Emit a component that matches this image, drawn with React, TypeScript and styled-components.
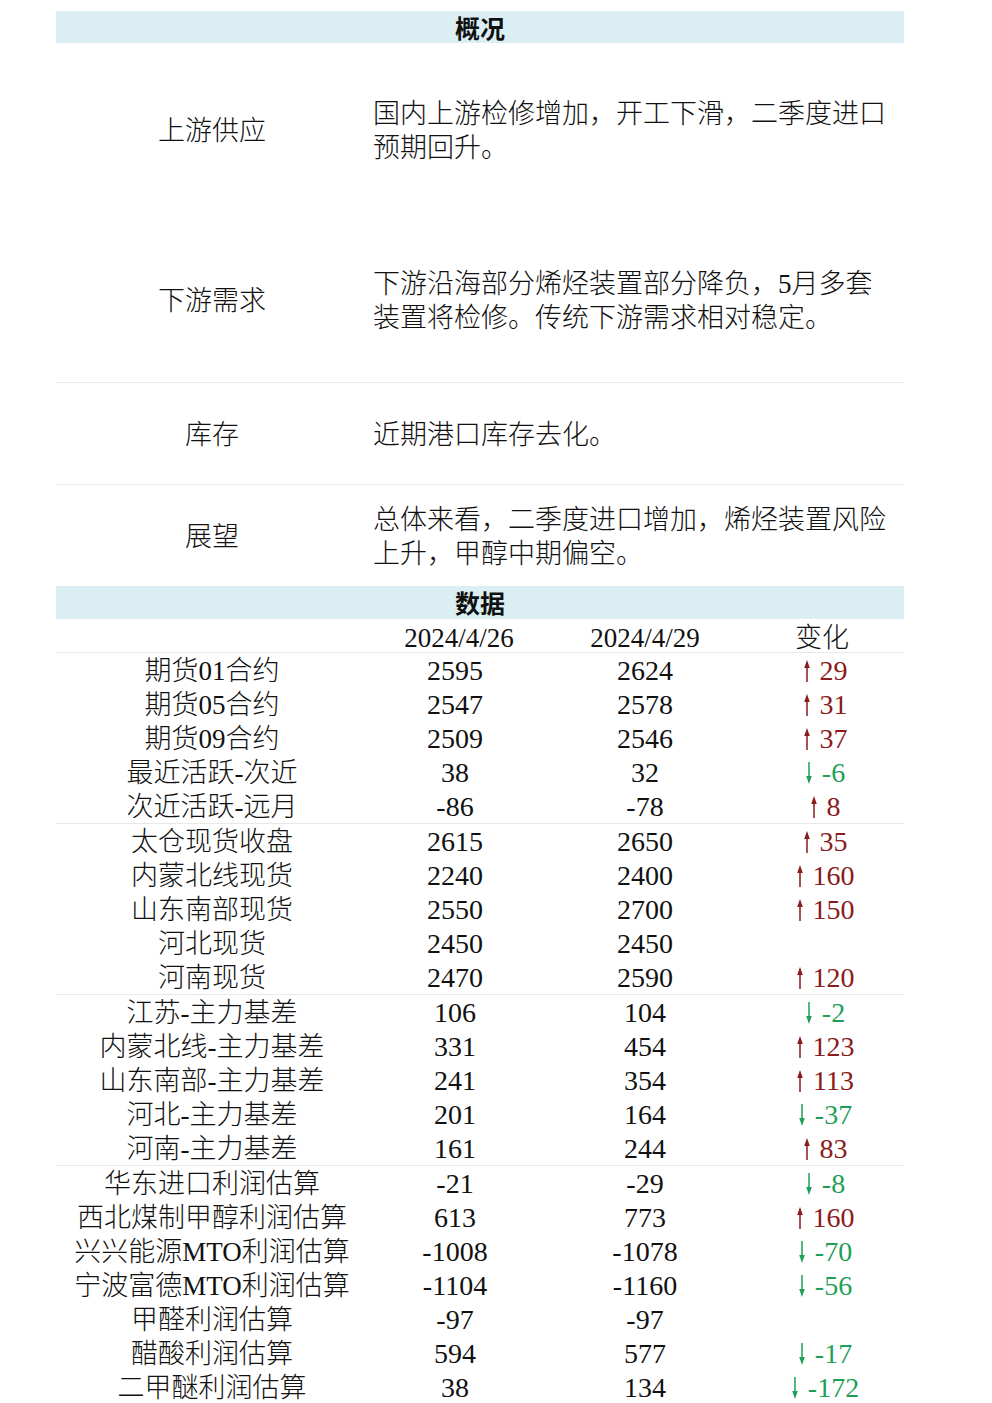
import React from "react";
import styled, { createGlobalStyle } from "styled-components";

const Global = createGlobalStyle`
  html, body { margin: 0; padding: 0; background: #ffffff; }
  body {
    font-family: "Liberation Serif", "Noto Sans CJK SC", serif;
    color: #111111;
  }
`;

const Page = styled.div`
  width: 848px;
  margin: 11px 0 0 56px;
  font-size: 27px;
  font-weight: 300;
`;

const Band = styled.div<{ $h: number }>`
  height: ${(p) => p.$h}px;
  background: #daeef3;
  display: flex;
  align-items: center;
  justify-content: center;
  font-family: "Noto Sans CJK SC", sans-serif;
  font-weight: 700;
  font-size: 25px;
  line-height: 1;
`;

const SummaryRow = styled.div<{ $h: number; $divider?: boolean }>`
  height: ${(p) => p.$h}px;
  display: grid;
  grid-template-columns: 312px 1fr;
  align-items: center;
  border-bottom: ${(p) => (p.$divider ? "1px solid #ececec" : "none")};
  box-sizing: border-box;
  padding-top: 2px;
`;

const SummaryLabel = styled.div`
  text-align: center;
  line-height: 34px;
`;

const SummaryText = styled.div`
  padding-left: 5px;
  width: 520px;
  line-height: 34px;
`;

const Grid = styled.div`
  display: grid;
  grid-template-columns: 312px 182px 190px 164px;
  line-height: 34px;
  box-sizing: border-box;
  padding-top: 1px;
`;

const HeadRow = styled(Grid)`
  height: 34px;
  border-bottom: 1px solid #e8e8e8;
  padding-top: 2px;
`;

const Group = styled.div`
  border-bottom: 1px solid #e8e8e8;
`;

const Row = styled(Grid)`
  height: 34px;
`;

const Cell = styled.div`
  text-align: center;
  white-space: nowrap;
`;

const NumCell = styled(Cell)<{ $shift?: number }>`
  font-size: 28px;
  padding-right: ${(p) => p.$shift ?? 0}px;
`;

const ChangeCell = styled.div<{ $up: boolean }>`
  display: flex;
  align-items: center;
  justify-content: center;
  gap: 9px;
  padding-left: 6px;
  font-size: 28px;
  color: ${(p) => (p.$up ? "#8b1a1a" : "#1f9f57")};
  white-space: nowrap;
`;

const Arrow = ({ up }: { up: boolean }) => (
  <svg width="8" height="22" viewBox="0 0 8 22" style={{ display: "block" }}>
    {up ? (
      <>
        <line x1="4" y1="6" x2="4" y2="22" stroke="currentColor" strokeWidth="1.5" />
        <polygon points="4,0 1.2,8 6.8,8" fill="currentColor" />
      </>
    ) : (
      <>
        <line x1="4" y1="0" x2="4" y2="16" stroke="currentColor" strokeWidth="1.5" />
        <polygon points="4,22 1.2,14 6.8,14" fill="currentColor" />
      </>
    )}
  </svg>
);

type DataRow = [string, string, string, string];

const groups: DataRow[][] = [
  [
    ["期货01合约", "2595", "2624", "29"],
    ["期货05合约", "2547", "2578", "31"],
    ["期货09合约", "2509", "2546", "37"],
    ["最近活跃-次近", "38", "32", "-6"],
    ["次近活跃-远月", "-86", "-78", "8"],
  ],
  [
    ["太仓现货收盘", "2615", "2650", "35"],
    ["内蒙北线现货", "2240", "2400", "160"],
    ["山东南部现货", "2550", "2700", "150"],
    ["河北现货", "2450", "2450", ""],
    ["河南现货", "2470", "2590", "120"],
  ],
  [
    ["江苏-主力基差", "106", "104", "-2"],
    ["内蒙北线-主力基差", "331", "454", "123"],
    ["山东南部-主力基差", "241", "354", "113"],
    ["河北-主力基差", "201", "164", "-37"],
    ["河南-主力基差", "161", "244", "83"],
  ],
  [
    ["华东进口利润估算", "-21", "-29", "-8"],
    ["西北煤制甲醇利润估算", "613", "773", "160"],
    ["兴兴能源MTO利润估算", "-1008", "-1078", "-70"],
    ["宁波富德MTO利润估算", "-1104", "-1160", "-56"],
    ["甲醛利润估算", "-97", "-97", ""],
    ["醋酸利润估算", "594", "577", "-17"],
    ["二甲醚利润估算", "38", "134", "-172"],
  ],
];

const summary = [
  { label: "上游供应", text: "国内上游检修增加，开工下滑，二季度进口预期回升。", h: 174, divider: false },
  { label: "下游需求", text: "下游沿海部分烯烃装置部分降负，5月多套装置将检修。传统下游需求相对稳定。", h: 166, divider: true },
  { label: "库存", text: "近期港口库存去化。", h: 102, divider: true },
  { label: "展望", text: "总体来看，二季度进口增加，烯烃装置风险上升，甲醇中期偏空。", h: 101, divider: false },
];

export default function App() {
  return (
    <>
      <Global />
      <Page>
        <Band $h={32}>概况</Band>
        {summary.map((s) => (
          <SummaryRow key={s.label} $h={s.h} $divider={s.divider}>
            <SummaryLabel>{s.label}</SummaryLabel>
            <SummaryText>{s.text}</SummaryText>
          </SummaryRow>
        ))}
        <Band $h={33}>数据</Band>
        <HeadRow>
          <Cell />
          <Cell>2024/4/26</Cell>
          <Cell>2024/4/29</Cell>
          <Cell>变化</Cell>
        </HeadRow>
        {groups.map((g, gi) => (
          <Group key={gi}>
            {g.map(([name, a, b, c]) => {
              const up = !c.startsWith("-");
              return (
                <Row key={name}>
                  <Cell>{name}</Cell>
                  <NumCell $shift={8}>{a}</NumCell>
                  <NumCell>{b}</NumCell>
                  {c ? (
                    <ChangeCell $up={up}>
                      <Arrow up={up} />
                      <span>{c}</span>
                    </ChangeCell>
                  ) : (
                    <Cell />
                  )}
                </Row>
              );
            })}
          </Group>
        ))}
      </Page>
    </>
  );
}
